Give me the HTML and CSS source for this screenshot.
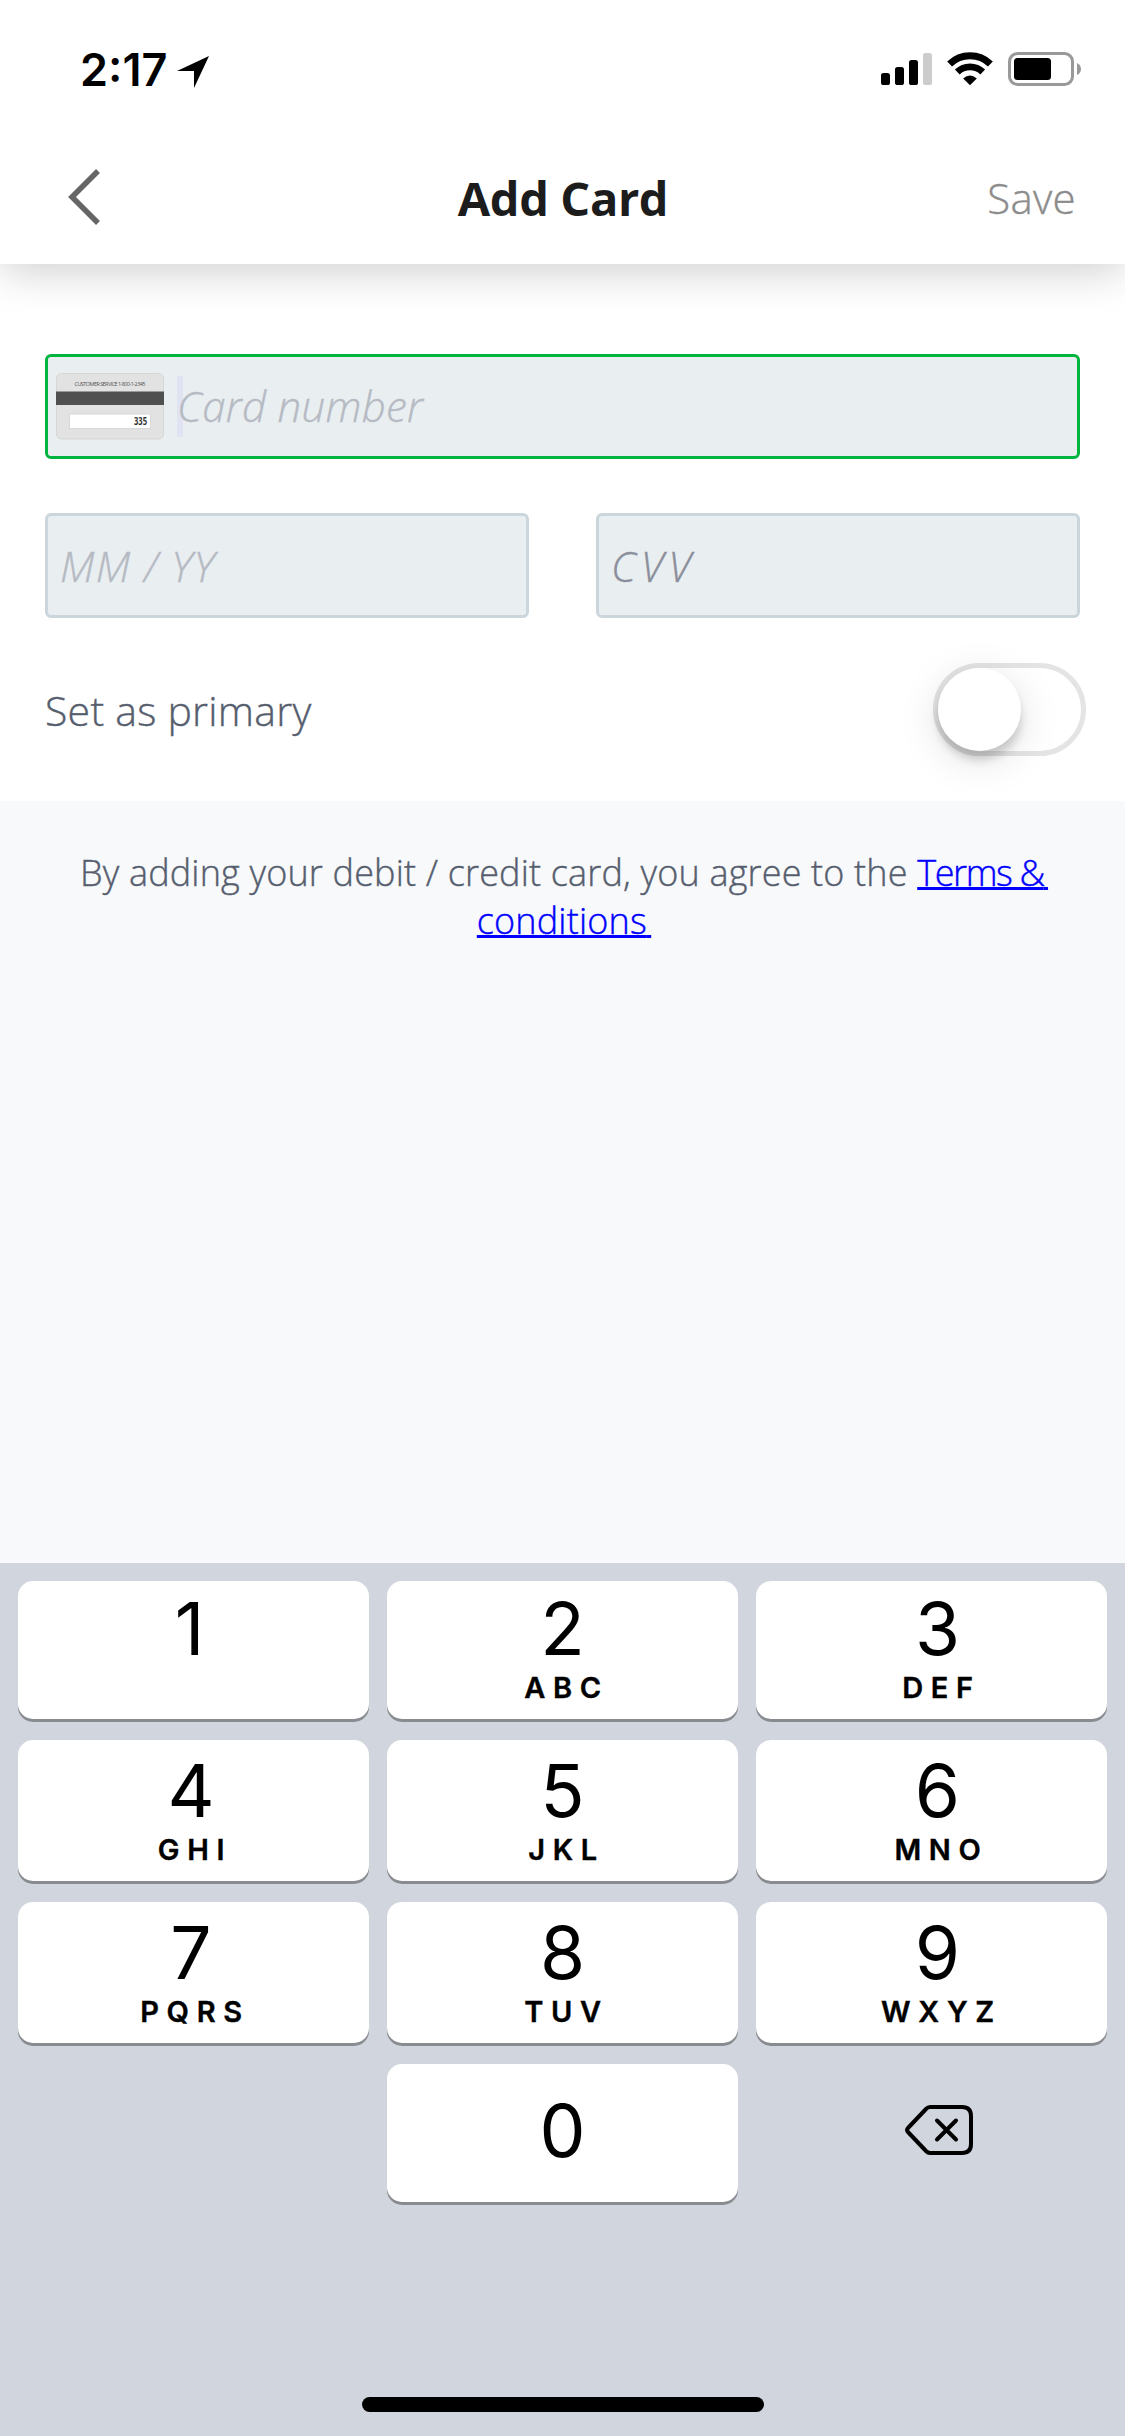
FILE: index.html
```html
<!DOCTYPE html>
<html lang="en">
<head>
<meta charset="utf-8">
<title>Add Card</title>
<link rel="stylesheet" href="styles.css">
</head>
<body>
<div class="screen">
  <header class="top">
    <div class="status">
      <div class="status-left">
        <span class="time">2:17</span>
        <svg class="location" width="32" height="32" viewBox="0 0 32 32"><path d="M32 0 17 32V15H0Z"/></svg>
      </div>
      <div class="status-right">
        <svg width="51" height="34" viewBox="0 0 51 34"><rect x="0" y="21" width="9" height="12" rx="2.6"/><rect x="14" y="15" width="9" height="18" rx="2.6"/><rect x="28" y="8" width="9" height="25" rx="2.6"/><rect x="42" y="1" width="9" height="32" rx="2.6" fill="#ccc"/></svg>
        <svg width="46" height="34" viewBox="0 0 46 34"><g fill="none" stroke="#000"><path d="M2.6 12a29.3 29.3 0 0 1 40.8 0" stroke-width="7"/><path d="M10.3 20a18.2 18.2 0 0 1 25.4 0" stroke-width="6.8"/></g><path d="M23 33.3 16.2 26.5Q23 20.5 29.800 26.500Z"/></svg>
        <svg width="73" height="34" viewBox="0 0 73 34"><rect x="1.500" y="1.500" width="63" height="31" rx="8" fill="none" stroke="#999" stroke-width="3"/><rect x="6" y="6" width="37" height="22" rx="3.500"/><path d="M69 11Q73 13 73 17T69 23Z" fill="#999"/></svg>
      </div>
    </div>
    <nav class="nav">
      <svg class="back" width="34" height="58" viewBox="0 0 34 58"><path d="M30 3 4 29 30 55" fill="none" stroke="#666" stroke-width="5.500"/></svg>
      <h1 class="title">Add Card</h1>
      <span class="save">Save</span>
    </nav>
  </header>
  <main class="form">
    <div class="field field-active">
      <svg class="card" width="108" height="67" viewBox="0 0 108 67"><rect x=".5" y=".5" width="107" height="65.500" rx="5" fill="#e2e2e2" stroke="#d6d6d6"/><rect x="0" y="18.500" width="108" height="13.500" fill="#505050"/><rect x="13.500" y="41" width="81" height="14.500" fill="#fff" stroke="#d8d8d8"/><text x="54" y="12.500" class="card-service" text-anchor="middle" textLength="71">CUSTOMER SERVICE 1-800-1-2345</text><text x="91" y="52" class="card-code" text-anchor="end" textLength="13" lengthAdjust="spacingAndGlyphs">335</text></svg>
      <span class="caret-box"><span class="placeholder number">Card number</span></span>
    </div>
    <div class="pair">
      <div class="field"><span class="placeholder expiry">MM / YY</span></div>
      <div class="field"><span class="placeholder cvv">CVV</span></div>
    </div>
    <div class="primary">
      <span class="primary-label">Set as primary</span>
      <span class="toggle"><span class="knob"></span></span>
    </div>
  </main>
  <section class="legal">
    <p>By adding your debit / credit card, you agree to the <a href="#"><span class="tight">Terms &amp;</span><span class="tail">&nbsp;</span><br>conditions<span class="tail">&nbsp;</span></a></p>
  </section>
  <section class="keyboard">
    <div class="keys">
      <div class="key first left one"><b>1</b></div><div class="key first"><b>2</b><i>ABC</i></div><div class="key first right"><b>3</b><i>DEF</i></div>
      <div class="key left"><b>4</b><i>GHI</i></div><div class="key"><b>5</b><i>JKL</i></div><div class="key right"><b>6</b><i>MNO</i></div>
      <div class="key left"><b>7</b><i>PQRS</i></div><div class="key"><b>8</b><i>TUV</i></div><div class="key right"><b>9</b><i>WXYZ</i></div>
      <div></div><div class="key zero"><b>0</b></div>
      <div class="delete"><svg width="70" height="52" viewBox="0 0 70 52"><path d="M26 3H58Q67 3 67 12V40Q67 49 58 49H26Q24 49 22 47L4 28Q2 26 4 24L22 5Q24 3 26 3Z" fill="none" stroke="#000" stroke-width="4"/><path d="M33 16.500 52 35.500M52 16.500 33 35.500" stroke="#000" stroke-width="4" stroke-linecap="round"/></svg></div>
    </div>
    <div class="home"></div>
  </section>
</div>
</body>
</html>
```
FILE: styles.css
```css
* { box-sizing: border-box; }
body { margin: 0; }
.screen {
  width: 1125px; height: 2436px; display: flex; flex-direction: column;
  background: #f8f9fb; overflow: hidden;
  font-family: "Open Sans", "Noto Sans", sans-serif; font-weight: 300;
}
svg { display: block; flex: none; }
.top { height: 264px; background: #fff; box-shadow: 0 6px 42px rgba(0,0,0,.2); z-index: 1; flex: none; }
.status { height: 132px; padding: 52px 44px 0 80px; display: flex; justify-content: space-between; }
.status-left { display: flex; gap: 10px; }
.time { font: 600 45px/36px Inter, sans-serif; width: 87px; white-space: nowrap; }
.location { margin-top: 4px; }
.status-right { display: flex; gap: 15px; }
.nav { height: 132px; padding: 0 49px 0 68px; display: grid; grid-template-columns: 190px 1fr 208px; }
.back { margin-top: 36px; }
.title { margin: 0; font-size: 47px; font-weight: 700; letter-spacing: -.4px; line-height: 132px; text-align: center; color: #1c1c1c; white-space: nowrap; }
.save { font-size: 42px; letter-spacing: .3px; line-height: 132px; text-align: right; color: #8c8c8c; }
.save, .placeholder, .primary-label, .legal { -webkit-text-stroke: .4px currentColor; }
.form { height: 537px; padding: 90px 45px 0; background: #fff; flex: none; }
.field { height: 105px; border: 3px solid #cbd6dc; border-radius: 6px; background: #e9eef1; display: flex; align-items: center; padding: 0 12px; }
.field-active { border-color: #00b440; padding: 0 8px; }
.card-service { font: 5.500px "Open Sans", sans-serif; fill: #555; }
.card-code { font: 700 10px "Open Sans", sans-serif; fill: #333; }
.caret-box { margin-left: 13px; height: 61px; display: flex; align-items: center; background: linear-gradient(#e0e4f2, #e0e4f2) 0 0 / 6px 61px no-repeat; margin-top: -1px; }
.placeholder { font-size: 42px; line-height: 56px; font-style: italic; color: #b6bac3; white-space: nowrap; }
.number { letter-spacing: .3px; }
.expiry { letter-spacing: 1.4px; }
.cvv { color: #8b8f9b; letter-spacing: 4.8px; }
.pair { margin-top: 54px; display: grid; grid-template-columns: 484px 484px; gap: 67px; }
.primary { margin-top: 45px; display: flex; justify-content: space-between; align-items: flex-start; margin-right: -6px; }
.primary-label { font-size: 41px; letter-spacing: .25px; line-height: 94px; color: #565e6e; }
.toggle { width: 153px; height: 93px; border: 5px solid #e4e4e4; border-radius: 47px; }
.knob { display: block; width: 83px; height: 83px; border-radius: 50%; background: #fff; box-shadow: 0 9px 9px rgba(0,0,0,.16), 0 9px 42px rgba(0,0,0,.13); }
.legal { flex: 1; padding: 48px 0 0 3px; text-align: center; font-size: 36px; letter-spacing: .17px; line-height: 48px; color: #565e6e; }
.legal p { margin: 0; white-space: nowrap; }
.legal a { color: #00f; text-decoration-thickness: 3px; text-underline-offset: 1px; text-decoration-skip-ink: none; }
.tight { letter-spacing: -1.4px; }
.tail { letter-spacing: -5px; }
.keyboard { height: 873px; padding: 18px 18px 0; background: #d1d5dd; flex: none; font-family: Inter, sans-serif; }
.keys { display: grid; grid-template-columns: repeat(3, 351px); grid-template-rows: 138px 141px 141px 138px; gap: 21px 18px; }
.key { background: #fff; border-radius: 15px; box-shadow: 0 3px #888b8f; display: flex; flex-direction: column; align-items: center; padding-top: 10px; }
.key.left { padding-right: 5px; }
.key.one { padding-right: 8px; }
.key.right { padding-left: 12px; }
.key.first { padding-top: 7px; }
.key.zero { padding-top: 26px; }
.key b { font-size: 73px; line-height: 82px; font-weight: 400; }
.key i { margin-top: 1px; padding-left: 8px; font-size: 29px; line-height: 34px; font-weight: 600; font-style: normal; letter-spacing: 7.7px; -webkit-text-stroke: .4px #000; }
.delete { display: flex; justify-content: center; padding: 40px 0 0 15px; }
.home { width: 402px; height: 15px; border-radius: 8px; background: #000; margin: 195px auto 0; }
```
